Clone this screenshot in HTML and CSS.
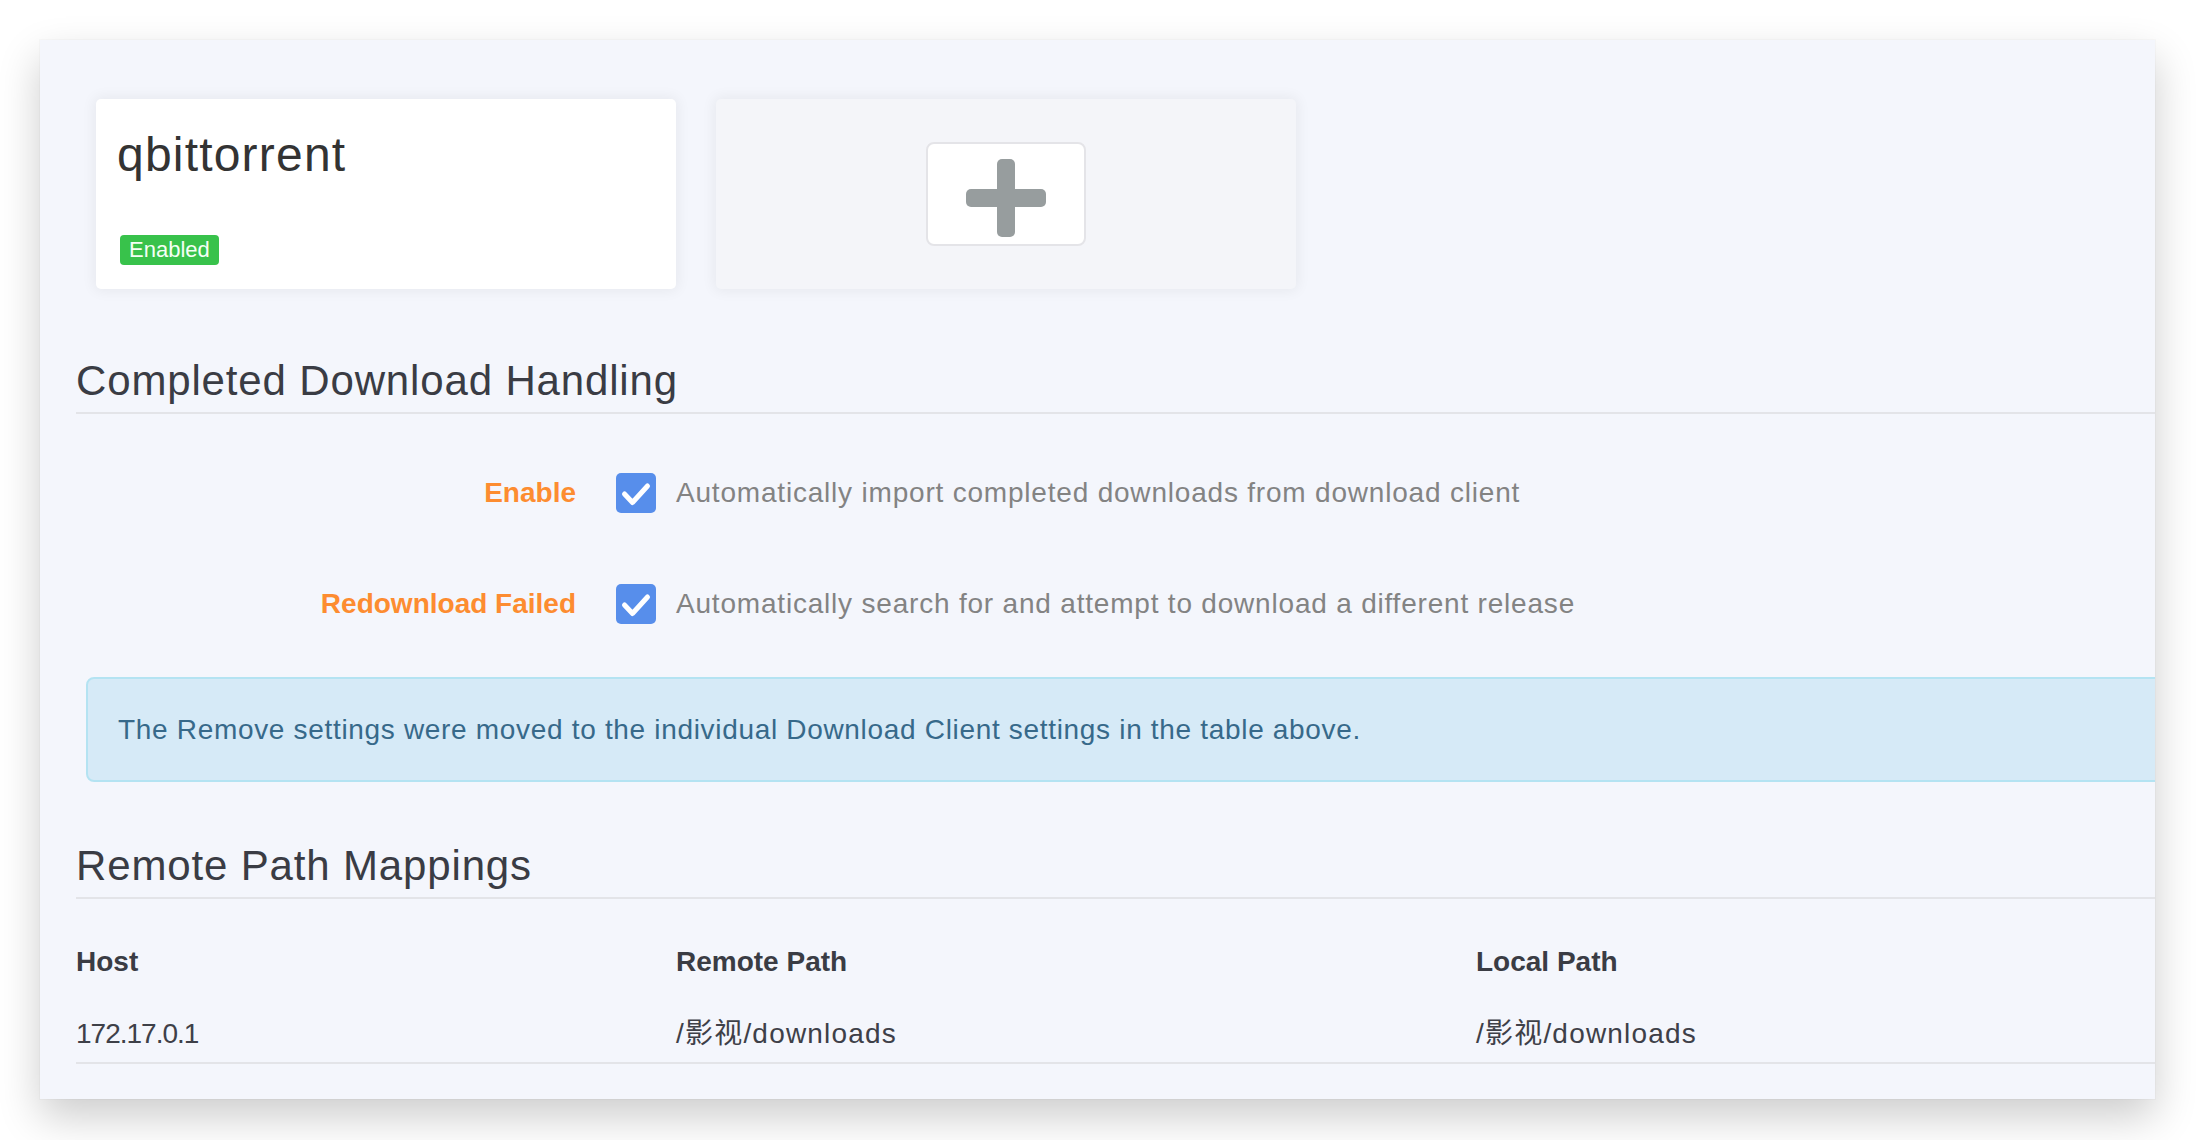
FILE: index.html
```html
<!DOCTYPE html>
<html lang="en">
<head>
<meta charset="utf-8">
<title>Download Clients</title>
<link rel="stylesheet" href="styles.css">
</head>
<body>
<div class="window">
  <div class="page">
    <div class="client-list">
      <div class="card">
        <div class="card-name">qbittorrent</div>
        <div class="labels"><span class="badge">Enabled</span></div>
      </div>
      <div class="card card-add">
        <div class="add-btn">
          <svg class="plus" width="80" height="78" viewBox="0 0 80 78" aria-hidden="true">
            <rect x="31" y="0" width="18" height="78" rx="5" fill="#979d9e"/>
            <rect x="0" y="30" width="80" height="18" rx="5" fill="#979d9e"/>
          </svg>
        </div>
      </div>
    </div>

    <div class="legend legend-first">Completed Download Handling</div>

    <div class="form">
      <div class="form-group">
        <label class="form-label">Enable</label>
        <div class="check-wrap">
          <span class="checkbox">
            <svg width="40" height="40" viewBox="0 0 40 40" aria-hidden="true"><polyline points="8.5,21 16.5,29.5 31.5,13" fill="none" stroke="#fff" stroke-width="5" stroke-linecap="round" stroke-linejoin="round"/></svg>
          </span>
          <span class="help">Automatically import completed downloads from download client</span>
        </div>
      </div>
      <div class="form-group form-group-last">
        <label class="form-label">Redownload Failed</label>
        <div class="check-wrap">
          <span class="checkbox">
            <svg width="40" height="40" viewBox="0 0 40 40" aria-hidden="true"><polyline points="8.5,21 16.5,29.5 31.5,13" fill="none" stroke="#fff" stroke-width="5" stroke-linecap="round" stroke-linejoin="round"/></svg>
          </span>
          <span class="help">Automatically search for and attempt to download a different release</span>
        </div>
      </div>
      <div class="alert">The Remove settings were moved to the individual Download Client settings in the table above.</div>
    </div>

    <div class="legend legend-second">Remote Path Mappings</div>

    <div class="table">
      <div class="th">Host</div>
      <div class="th">Remote Path</div>
      <div class="th">Local Path</div>
      <div class="td td-host">172.17.0.1</div>
      <div class="td td-path">/影视/downloads</div>
      <div class="td td-path">/影视/downloads</div>
    </div>
  </div>
</div>
</body>
</html>
```

FILE: styles.css
```css
html, body {
  margin: 0;
  padding: 0;
  background: #ffffff;
}

body {
  min-height: 100vh;
  padding-top: 40px;
  box-sizing: border-box;
  font-family: "Liberation Sans", "Noto Sans CJK SC", sans-serif;
  color: #3a3c44;
}

.window {
  margin: 0 41px 0 40px;
  height: 1059px;
  box-sizing: border-box;
  background: #f4f6fc;
  overflow: hidden;
  box-shadow: 0 18px 40px rgba(0, 0, 0, 0.2), 0 0 0 1px rgba(0, 0, 0, 0.02);
}

.page {
  padding: 59px 0 0 36px;
  margin-right: -60px;
}

/* client cards */
.client-list {
  display: flex;
  gap: 40px;
  padding-left: 20px;
  margin-bottom: 61px;
}

.card {
  width: 580px;
  height: 190px;
  box-sizing: border-box;
  padding: 20px 20px 0 21px;
  background: #ffffff;
  border-radius: 5px;
  box-shadow: 0 0 14px 2px rgba(0, 0, 0, 0.06);
}

.card-name {
  font-size: 48px;
  line-height: 72px;
  letter-spacing: 1.2px;
  color: #333333;
  margin-bottom: 44px;
}

.labels {
  display: flex;
  padding-left: 3px;
}

.badge {
  display: inline-block;
  height: 30px;
  box-sizing: border-box;
  padding: 0 9px;
  line-height: 30px;
  font-size: 22px;
  color: #f4fff5;
  background: #38c24b;
  border-radius: 4px;
}

.card-add {
  background: #f4f5f9;
  display: flex;
  align-items: center;
  justify-content: center;
  padding: 0;
}

.add-btn {
  width: 160px;
  height: 104px;
  box-sizing: border-box;
  border: 2px solid #e4e4e8;
  border-radius: 8px;
  background: #ffffff;
  display: flex;
  justify-content: center;
  align-items: flex-start;
  padding-top: 15px;
}

.plus {
  display: block;
}

/* legends */
.legend {
  font-size: 42px;
  line-height: 62px;
  letter-spacing: 0.85px;
  color: #3a3c44;
  border-bottom: 2px solid #e3e4e8;
}

.legend-first {
  margin-bottom: 44px;
}

.legend-second {
  margin-top: 53px;
  margin-bottom: 27px;
}

/* form */
.form-group {
  display: flex;
  align-items: center;
  height: 70px;
  margin-bottom: 41px;
}

.form-group-last {
  margin-bottom: 0;
}

.form-label {
  flex: 0 0 500px;
  margin-right: 40px;
  text-align: right;
  font-weight: bold;
  font-size: 28px;
  line-height: 70px;
  color: #fd8c30;
}

.check-wrap {
  display: flex;
  align-items: center;
}

.checkbox {
  width: 40px;
  height: 40px;
  border-radius: 5px;
  background: #578eeb;
  margin-right: 20px;
  display: flex;
}

.help {
  font-size: 28px;
  letter-spacing: 0.8px;
  color: #838383;
}

.alert {
  margin: 38px 0 0 10px;
  padding: 30px 30px;
  border: 2px solid #b4e3f2;
  border-radius: 8px;
  background: #d6eaf7;
  color: #37698a;
  font-size: 28px;
  line-height: 41px;
  letter-spacing: 0.68px;
}

/* table */
.table {
  display: grid;
  grid-template-columns: 600px 800px 1fr;
}

.th {
  font-weight: bold;
  font-size: 28px;
  line-height: 43px;
  padding: 14px 0 22px;
  color: #3a3c44;
}

.td {
  font-size: 28px;
  line-height: 43px;
  padding: 7px 0;
  color: #3e4048;
  border-bottom: 2px solid #e3e4e8;
}

.td-host {
  letter-spacing: -1px;
}

.td-path {
  letter-spacing: 1.2px;
}
```
